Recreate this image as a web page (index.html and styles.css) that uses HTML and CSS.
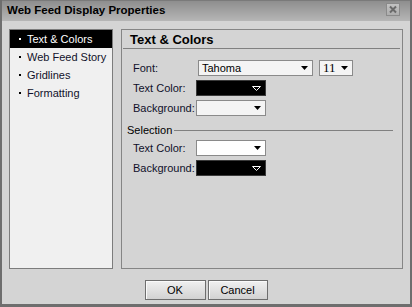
FILE: index.html
```html
<!DOCTYPE html>
<html>
<head>
<meta charset="utf-8">
<link rel="stylesheet" href="styles.css">
</head>
<body>
<div class="dialog">
  <div class="titlebar">
    <span class="title">Web Feed Display Properties</span>
    <span class="close"><svg width="12" height="11" viewBox="0 0 12 11"><path d="M3 2.5 L9 8.5 M9 2.5 L3 8.5" stroke="#6a6a6a" stroke-width="2" fill="none"/></svg></span>
  </div>
  <div class="body">
    <div class="main">
      <ul class="nav">
        <li class="item selected"><span class="dot"></span>Text &amp; Colors</li>
        <li class="item"><span class="dot"></span>Web Feed Story</li>
        <li class="item"><span class="dot"></span>Gridlines</li>
        <li class="item"><span class="dot"></span>Formatting</li>
      </ul>
      <div class="panel">
        <div class="panel-head">Text &amp; Colors</div>
        <div class="rows">
          <div class="row">
            <span class="label">Font:</span>
            <div class="select font-select"><span>Tahoma</span><svg class="arrow" width="7" height="4" viewBox="0 0 7 4"><path d="M0 0 H7 L3.5 4 Z" fill="#000"/></svg></div>
            <div class="select size-select"><span>11</span><svg class="arrow" width="7" height="4" viewBox="0 0 7 4"><path d="M0 0 H7 L3.5 4 Z" fill="#000"/></svg></div>
          </div>
          <div class="row">
            <span class="label">Text Color:</span>
            <div class="swatch dark"><svg class="arrow" width="9" height="5" viewBox="0 0 9 5"><path d="M0.5 0.5 H8.5 L4.5 4.5 Z" fill="none" stroke="#fff" stroke-width="1"/></svg></div>
          </div>
          <div class="row">
            <span class="label">Background:</span>
            <div class="swatch light"><svg class="arrow" width="7" height="4" viewBox="0 0 7 4"><path d="M0 0 H7 L3.5 4 Z" fill="#000"/></svg></div>
          </div>
        </div>
        <div class="group"><span>Selection</span><span class="rule"></span></div>
        <div class="rows sel-rows">
          <div class="row">
            <span class="label">Text Color:</span>
            <div class="swatch white"><svg class="arrow" width="7" height="4" viewBox="0 0 7 4"><path d="M0 0 H7 L3.5 4 Z" fill="#000"/></svg></div>
          </div>
          <div class="row">
            <span class="label">Background:</span>
            <div class="swatch dark"><svg class="arrow" width="9" height="5" viewBox="0 0 9 5"><path d="M0.5 0.5 H8.5 L4.5 4.5 Z" fill="none" stroke="#fff" stroke-width="1"/></svg></div>
          </div>
        </div>
      </div>
    </div>
    <div class="buttons">
      <button class="btn ok">OK</button>
      <button class="btn cancel">Cancel</button>
    </div>
  </div>
</div>
</body>
</html>
```
FILE: styles.css
```css
* { box-sizing: border-box; }
html, body { margin: 0; padding: 0; background: #d4d4d4; }
body { font-family: "Liberation Sans", Arial, sans-serif; font-size: 11px; color: #000; }

.dialog {
  width: 412px;
  height: 307px;
  background: #d4d4d4;
  border-left: 2px solid #6e6e6e;
  border-right: 2px solid #6e6e6e;
  border-bottom: 3px solid #6e6e6e;
  display: flex;
  flex-direction: column;
}

.titlebar {
  height: 21px;
  border-top: 1px solid #7a7a7a;
  background: linear-gradient(#8e8e8e, #b6b6b6);
  display: flex;
  align-items: center;
  justify-content: space-between;
  padding: 0 10px 0 5px;
}
.title {
  font-weight: bold;
  font-size: 11.5px;
  line-height: 14px;
  margin-top: -2px;
}
.close {
  width: 14px;
  height: 13px;
  border: 1px solid #8a8a8a;
  background: linear-gradient(#c2c2c2, #adadad);
  display: flex;
  align-items: center;
  justify-content: center;
  margin-top: -3px;
}
.close svg { display: block; }

.body {
  flex: 1;
  padding: 8px 7px 0 7px;
  display: flex;
  flex-direction: column;
}
.main {
  display: flex;
  gap: 8px;
  height: 240px;
}

.nav {
  list-style: none;
  margin: 0;
  padding: 0;
  width: 104px;
  background: #f0f0f0;
  border: 1px solid #7c7c7c;
}
.item {
  height: 18px;
  line-height: 18px;
  padding-left: 9px;
  display: flex;
  align-items: center;
  white-space: nowrap;
  color: #10102a;
}
.item.selected { background: #000; color: #fff; }
.dot {
  width: 2px;
  height: 2px;
  background: #000;
  margin-right: 6px;
  flex: none;
}
.item.selected .dot { background: #fff; }

.panel {
  flex: 1;
  border: 1px solid #858585;
  background: #d4d4d4;
}
.panel-head {
  font-weight: bold;
  font-size: 13px;
  line-height: 16px;
  padding: 2px 0 0 7px;
  margin: 0 2px 0 1px;
  height: 19px;
  border-bottom: 1px solid #808080;
}

.rows {
  display: flex;
  flex-direction: column;
  gap: 4px;
  margin-top: 11px;
}
.row {
  display: flex;
  align-items: center;
  height: 16px;
  padding-left: 11px;
}
.label {
  width: 63px;
  flex: none;
  color: #10102a;
}

.select {
  height: 16px;
  border: 1px solid #8a8a8a;
  background: #f4f4f4;
  display: flex;
  align-items: center;
  justify-content: space-between;
  padding: 0 4px 0 3px;
  font-family: "Liberation Sans", Arial, sans-serif;
  font-size: 11px;
}
.font-select { width: 115px; margin-left: 2px; }
.size-select { width: 34px; margin-left: 6px; font-family: "Liberation Serif", "Times New Roman", serif; font-size: 13px; }
.arrow { display: block; flex: none; }

.swatch {
  width: 70px;
  height: 16px;
  border: 1px solid #8a8a8a;
  display: flex;
  align-items: center;
  justify-content: flex-end;
  padding-right: 4px;
}
.swatch.dark { background: #000; border-color: #3a3a3a; }
.swatch.light { background: #f4f4f4; }
.swatch.white { background: #fff; }

.group {
  display: flex;
  align-items: center;
  height: 16px;
  margin-top: 6px;
  padding-left: 5px;
  margin-right: 9px;
}
.group .rule {
  flex: 1;
  height: 1px;
  background: #808080;
  margin-left: 2px;
  margin-top: 1px;
}
.sel-rows { margin-top: 2px; }

.buttons {
  display: flex;
  justify-content: center;
  gap: 2px;
  margin-top: 11px;
}
.btn {
  height: 20px;
  border: 1px solid #6e6e6e;
  background: linear-gradient(#f0f0f0, #d2d2d2);
  box-shadow: inset 1px 1px 0 #fafafa;
  font-family: "Liberation Sans", Arial, sans-serif;
  font-size: 11px;
  color: #000;
  padding: 0;
}
.btn.ok { width: 61px; }
.btn.cancel { width: 60px; }
```
